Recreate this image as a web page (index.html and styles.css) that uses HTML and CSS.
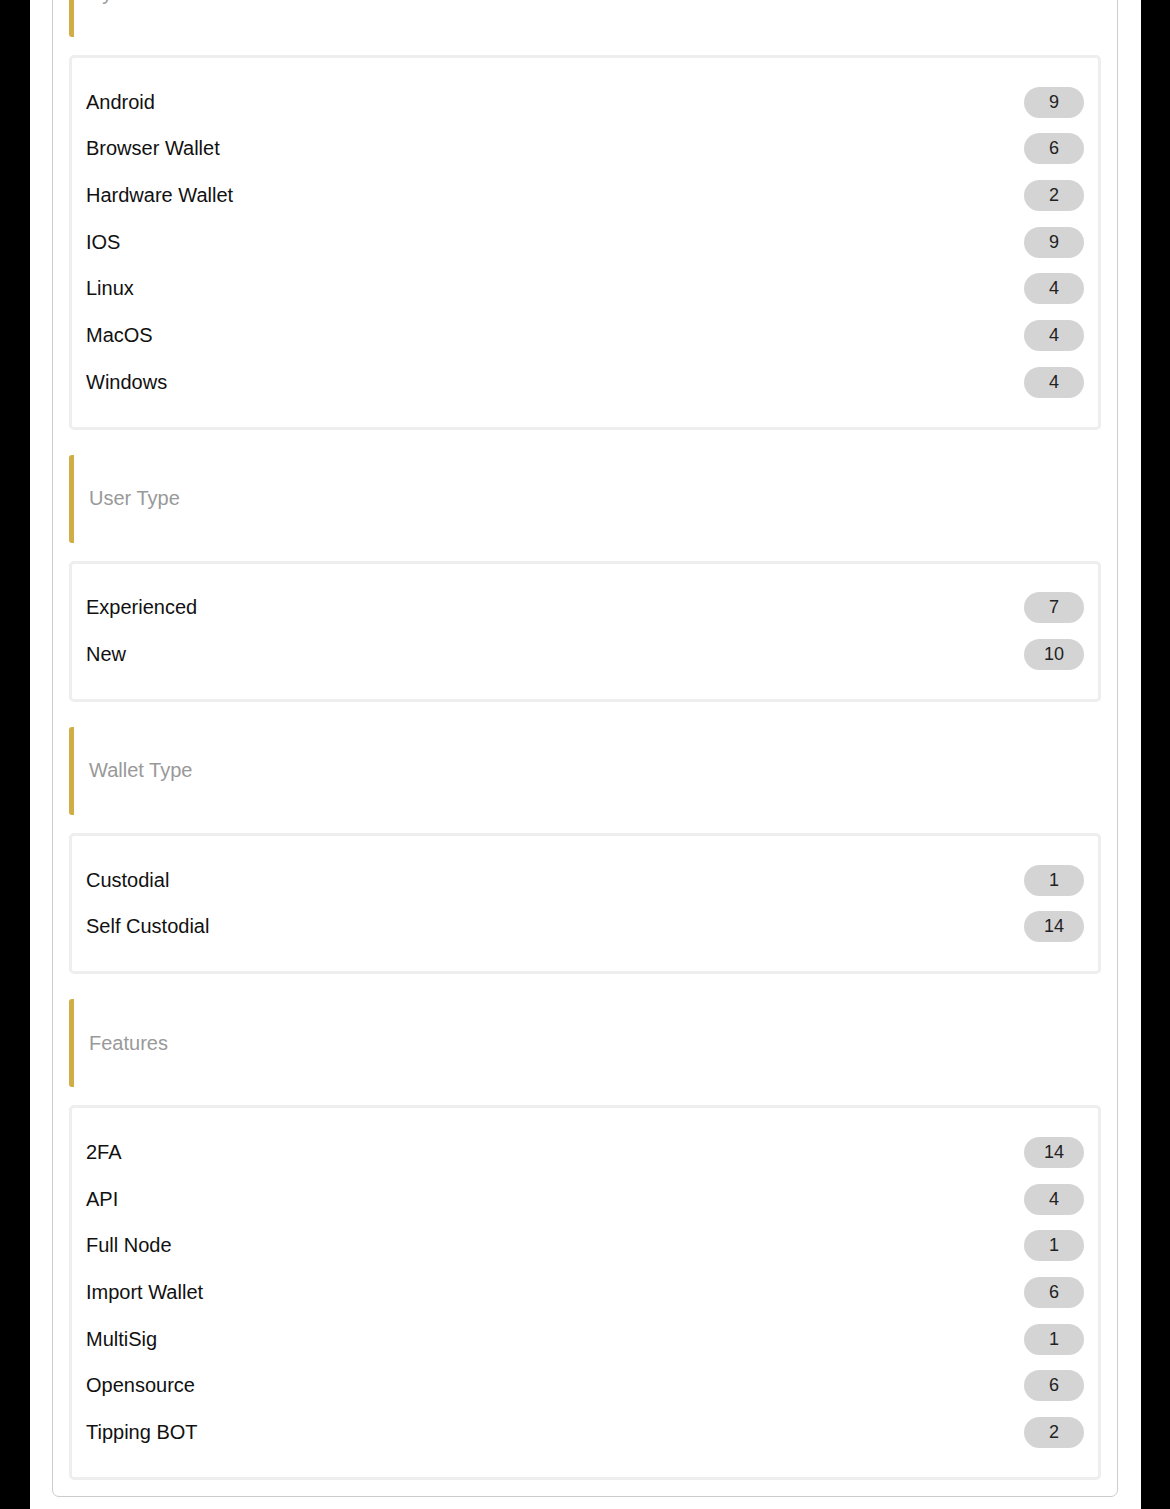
FILE: index.html
```html
<!doctype html>
<html>
    <head>
        <title>Wallet filters</title>
        <link rel="stylesheet" href="styles.css">
    </head>
    <body>
        <div class="page">
            <div class="panel">
                <div class="heading">System</div>
                <ul class="list">
                    <li><span>Android</span><span class="count">9</span></li>
                    <li><span>Browser Wallet</span><span class="count">6</span></li>
                    <li><span>Hardware Wallet</span><span class="count">2</span></li>
                    <li><span>IOS</span><span class="count">9</span></li>
                    <li><span>Linux</span><span class="count">4</span></li>
                    <li><span>MacOS</span><span class="count">4</span></li>
                    <li><span>Windows</span><span class="count">4</span></li>
                </ul>

                <div class="heading">User Type</div>
                <ul class="list">
                    <li><span>Experienced</span><span class="count">7</span></li>
                    <li><span>New</span><span class="count">10</span></li>
                </ul>

                <div class="heading">Wallet Type</div>
                <ul class="list">
                    <li><span>Custodial</span><span class="count">1</span></li>
                    <li><span>Self Custodial</span><span class="count">14</span></li>
                </ul>

                <div class="heading">Features</div>
                <ul class="list">
                    <li><span>2FA</span><span class="count">14</span></li>
                    <li><span>API</span><span class="count">4</span></li>
                    <li><span>Full Node</span><span class="count">1</span></li>
                    <li><span>Import Wallet</span><span class="count">6</span></li>
                    <li><span>MultiSig</span><span class="count">1</span></li>
                    <li><span>Opensource</span><span class="count">6</span></li>
                    <li><span>Tipping BOT</span><span class="count">2</span></li>
                </ul>
            </div>
        </div>
    </body>
</html>
```

FILE: styles.css
```css
html,
body {
    margin: 0;
    background: #000000;
    font-family: "Liberation Sans", Arial, sans-serif;
}

.page {
    background: #ffffff;
    margin: -52px 29px 0 30px;
    padding: 0 23px 40px 22px;
}

.panel {
    border: 1px solid #cccccc;
    border-radius: 7px;
    padding: 0 16px 16px;
}

.heading {
    height: 88px;
    display: flex;
    align-items: center;
    border-left: 5px solid #d0ae45;
    border-radius: 3px;
    padding-left: 15px;
    margin-bottom: 18px;
    color: #999999;
    font-size: 20px;
}

.list {
    list-style: none;
    margin: 0 0 25px;
    padding: 21px 14px;
    border: 3px solid #eeeeee;
    border-radius: 5px;
}

.list:last-child {
    margin-bottom: 0;
}

.list li {
    height: 46.67px;
    display: flex;
    align-items: center;
    justify-content: space-between;
    font-size: 20px;
    color: #111111;
}

.count {
    width: 60px;
    height: 31px;
    border-radius: 16px;
    background: #d4d4d4;
    display: flex;
    align-items: center;
    justify-content: center;
    font-size: 18px;
    color: #222222;
}
```
